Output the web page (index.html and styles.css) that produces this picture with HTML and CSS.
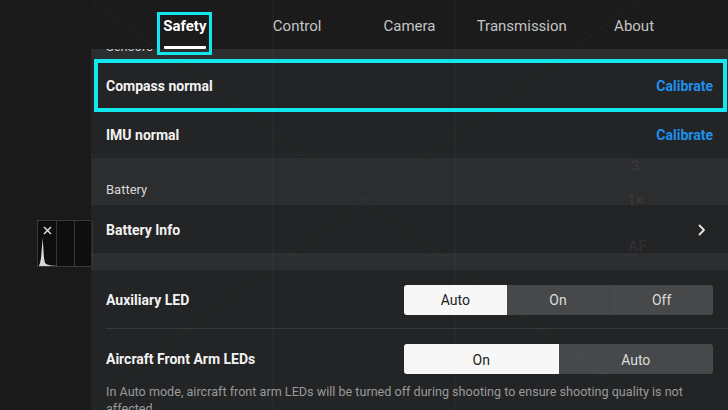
FILE: index.html
```html
<!DOCTYPE html>
<html>
<head>
<meta charset="utf-8">
<link rel="stylesheet" href="styles.css">
</head>
<body>
<div class="app">
  <aside class="cam">
    <div class="histo">
      <div class="histo-cell first">
        <svg class="histo-x" width="9" height="9" viewBox="0 0 9 9"><path d="M1 1 L8 8 M8 1 L1 8" stroke="#e8e8e8" stroke-width="1.4"/></svg>
        <svg class="histo-graph" width="19" height="30" viewBox="0 0 19 30"><path d="M0 30 L1 27 L2 22 L3 10 L3.6 2 L4.2 10 L5 22 L6 27 L8 28.5 L12 29.5 L19 30 Z" fill="#d8d8d8"/></svg>
      </div>
      <div class="histo-cell"></div>
      <div class="histo-cell"></div>
    </div>
  </aside>
  <main class="settings">
    <nav class="tabs">
      <div class="tab active">Safety<span class="underline"></span><span class="hl-tab"></span></div>
      <div class="tab">Control</div>
      <div class="tab">Camera</div>
      <div class="tab">Transmission</div>
      <div class="tab">About</div>
    </nav>
    <div class="panel">
      <div class="clip-header"><span>Sensors</span></div>
      <div class="row row-hl">
        <span class="label">Compass normal</span>
        <span class="action">Calibrate</span>
        <span class="hl-row"></span>
      </div>
      <div class="row">
        <span class="label">IMU normal</span>
        <span class="action">Calibrate</span>
      </div>
      <div class="section">Battery</div>
      <div class="row row-b">
        <span class="label">Battery Info</span>
        <svg class="chev" width="8" height="12" viewBox="0 0 8 12"><path d="M1.5 1.5 L6 6 L1.5 10.5" fill="none" stroke="#e6e6e6" stroke-width="1.8" stroke-linecap="round" stroke-linejoin="round"/></svg>
      </div>
      <div class="spacer"></div>
      <div class="row tall">
        <span class="label">Auxiliary LED</span>
        <div class="seg three">
          <span class="opt on">Auto</span>
          <span class="opt">On</span>
          <span class="opt">Off</span>
        </div>
      </div>
      <div class="divider"></div>
      <div class="row led">
        <span class="label">Aircraft Front Arm LEDs</span>
        <div class="seg two">
          <span class="opt on">On</span>
          <span class="opt">Auto</span>
        </div>
      </div>
      <p class="desc">In Auto mode, aircraft front arm LEDs will be turned off during shooting to ensure shooting quality is not affected.</p>
    </div>
  </main>
  <div class="ghost">
    <svg width="728" height="410" viewBox="0 0 728 410">
      <g stroke="#ffffff" stroke-opacity="0.04" stroke-width="1" fill="none">
        <line x1="273" y1="0" x2="273" y2="410"/>
        <line x1="455" y1="0" x2="455" y2="410"/>
        <line x1="91" y1="155" x2="637" y2="155"/>
        <line x1="91" y1="255" x2="637" y2="255"/>
        <line x1="640" y1="0" x2="90" y2="400"/>
        <line x1="90" y1="0" x2="640" y2="400"/>
      </g>
    </svg>
    <span class="ghost-t g3">3</span>
    <span class="ghost-t g1">1×</span>
    <span class="ghost-t gaf">AF</span>
  </div>
</div>
</body>
</html>
```

FILE: styles.css
```css
* { box-sizing: border-box; }
html, body { margin: 0; padding: 0; }
body {
  width: 728px;
  height: 410px;
  overflow: hidden;
  background: #1a1a1a;
  font-family: Roboto, "Liberation Sans", Arial, sans-serif;
  color: #eeeeee;
}
.app {
  position: relative;
  display: flex;
  width: 728px;
  height: 410px;
}
.cam {
  width: 91px;
  flex: none;
  padding: 220px 0 0 37px;
}
.histo {
  display: flex;
  width: 56px;
  height: 47px;
  background: #0e0e0e;
  border: 1px solid #3a3a3a;
  border-right: none;
}
.histo-cell {
  position: relative;
  width: 19px;
  height: 100%;
  border-right: 1px solid #383838;
}
.histo-cell.first { width: 20px; }
.histo-x { position: absolute; left: 5px; top: 5px; }
.histo-graph { position: absolute; left: 1px; bottom: 0; }

.settings {
  flex: 1;
  display: flex;
  flex-direction: column;
  min-width: 0;
}
.tabs {
  height: 49px;
  flex: none;
  display: flex;
  justify-content: center;
  background: #1b1b1b;
}
.tab {
  position: relative;
  width: 112.3px;
  text-align: center;
  font-size: 15px;
  line-height: 49px;
  padding-top: 2px;
  color: #c4c4c4;
}
.tab.active { color: #ffffff; font-weight: 700; }
.underline {
  position: absolute;
  left: 35px;
  width: 42px;
  bottom: 0;
  height: 3px;
  border-radius: 1px;
  background: #ffffff;
}
.hl-tab {
  position: absolute;
  left: 28px;
  top: 12px;
  width: 55px;
  height: 43px;
  border: 3px solid #12e6ee;
  z-index: 3;
}
.panel {
  flex: 1;
  overflow: hidden;
  background: #232425;
}
.clip-header {
  height: 10px;
  overflow: hidden;
  background: #2c2d2f;
  padding-left: 15px;
  font-size: 13px;
  color: #cfcfcf;
}
.clip-header span { display: block; line-height: 15px; margin-top: -10px; }
.row {
  position: relative;
  display: flex;
  align-items: center;
  justify-content: space-between;
  height: 47px;
  padding: 1px 15px 0 15px;
}
.row-hl { height: 52px; padding-top: 2px; }
.row-b { height: 48px; }
.row.tall { height: 58px; }
.row.led { height: 54px; align-items: flex-start; padding-top: 15px; }
.label {
  font-size: 14px;
  font-weight: 700;
  color: #f2f2f2;
}
.row.led .label { line-height: 31px; }
.action {
  font-size: 14px;
  font-weight: 700;
  color: #1e90f0;
}
.hl-row {
  position: absolute;
  left: 3px;
  right: 1px;
  top: 0;
  bottom: -1px;
  border: 4px solid #12e6ee;
}
.chev { margin-right: 7px; }
.section {
  height: 47px;
  background: #2c2d2f;
  padding: 24px 15px 0;
  font-size: 13px;
  line-height: 15px;
  color: #d8d8d8;
}
.spacer { height: 17px; background: #2c2d2f; }
.seg {
  display: flex;
  width: 309px;
  height: 30px;
  border-radius: 3px;
  overflow: hidden;
  background: #474849;
}
.opt {
  flex: 1;
  display: flex;
  align-items: center;
  justify-content: center;
  padding-top: 1px;
  font-size: 14px;
  color: #dcdcdc;
}
.seg.three .opt + .opt { border-left: 1px solid #3e3f40; }
.seg.three .opt.on + .opt { border-left: none; }
.opt.on { background: #f7f7f7; color: #222222; }
.divider {
  height: 1px;
  margin-left: 15px;
  background: #38393a;
}
.desc {
  margin: 0;
  padding: 0 36px 0 15px;
  font-size: 12.6px;
  line-height: 17px;
  color: #9a9a9a;
}
.ghost {
  position: absolute;
  inset: 0;
  pointer-events: none;
}
.ghost svg { position: absolute; left: 0; top: 0; }
.ghost-t {
  position: absolute;
  font-size: 15px;
  font-weight: 700;
  color: rgba(255,255,255,0.06);
}
.g3 { left: 631px; top: 157px; }
.g1 { left: 627px; top: 191px; color: rgba(200,170,60,0.1); }
.gaf { left: 628px; top: 237px; }
```
